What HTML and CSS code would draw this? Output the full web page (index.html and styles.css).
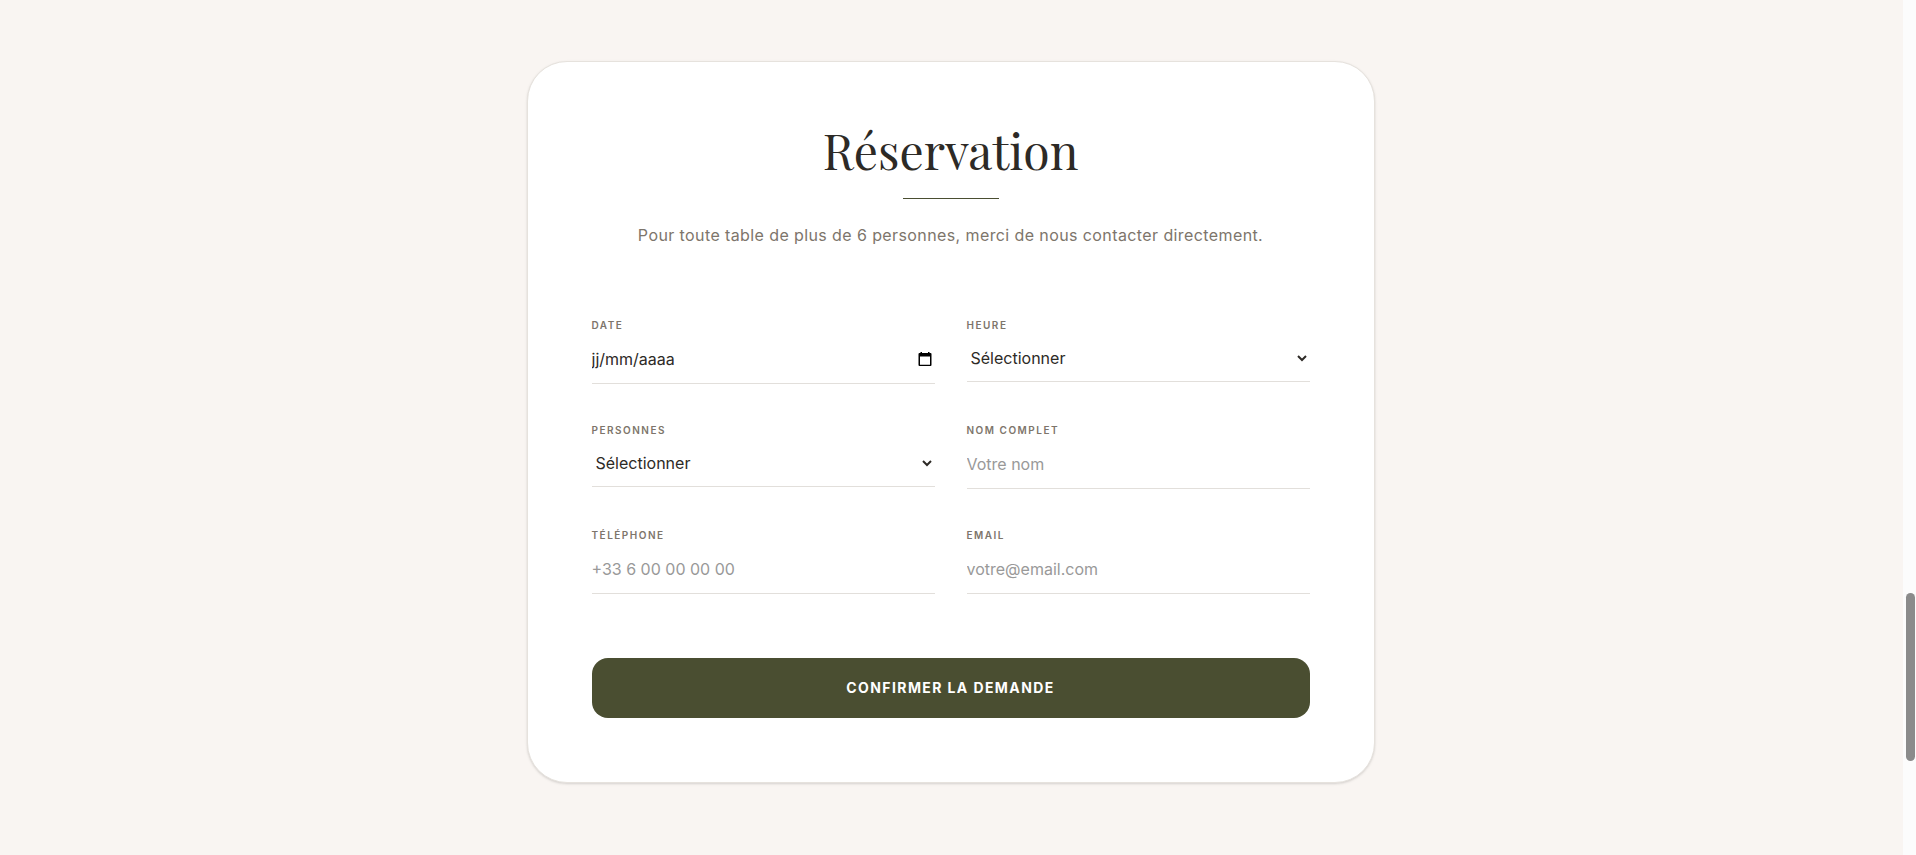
FILE: index.html
```html
<!DOCTYPE html>
<html lang="fr">
<head>
<meta charset="utf-8">
<meta name="viewport" content="width=device-width, initial-scale=1">
<title>Réservation</title>
<link rel="stylesheet" href="styles.css">
</head>
<body class="page">
<main class="section">
  <section class="card">
    <header class="card-header">
      <h2 class="title">Réservation</h2>
      <div class="divider"></div>
      <p class="subtitle">Pour toute table de plus de 6 personnes, merci de nous contacter directement.</p>
    </header>
    <form class="form">
      <div class="fields">
        <div class="field">
          <label class="label" for="date">Date</label>
          <div class="date-box">
            <input class="control date" id="date" type="text" placeholder="jj/mm/aaaa">
            <button class="picker" type="button" aria-label="Ouvrir le calendrier">
              <svg class="picker-icon" viewBox="0 0 14 14" aria-hidden="true"><path fill="#000" fill-rule="evenodd" d="M2.500 0H4V1H10V0H11.500V1H12.500Q13.500 1 13.500 2V13Q13.500 14 12.500 14H1.500Q.5 14 .5 13V2Q.5 1 1.500 1H2.500ZM2 4.500V12.700H12V4.500Z"/></svg>
            </button>
          </div>
        </div>
        <div class="field">
          <label class="label" for="time">Heure</label>
          <select class="control select" id="time"><option>Sélectionner</option></select>
        </div>
        <div class="field">
          <label class="label" for="guests">Personnes</label>
          <select class="control select" id="guests"><option>Sélectionner</option></select>
        </div>
        <div class="field">
          <label class="label" for="name">Nom complet</label>
          <input class="control" id="name" type="text" placeholder="Votre nom">
        </div>
        <div class="field">
          <label class="label" for="phone">Téléphone</label>
          <input class="control" id="phone" type="tel" placeholder="+33 6 00 00 00 00">
        </div>
        <div class="field">
          <label class="label" for="email">Email</label>
          <input class="control" id="email" type="email" placeholder="votre@email.com">
        </div>
      </div>
      <button class="submit" type="submit">Confirmer la demande</button>
    </form>
  </section>
</main>
<div class="scrollbar" aria-hidden="true"><div class="thumb"></div></div>
</body>
</html>
```
FILE: styles.css
```css
* { box-sizing: border-box; }

.page {
  margin: 0;
  min-height: 100vh;
  display: flex;
  background: #f9f5f2;
  color: #2d2a26;
  font-family: Inter, "Liberation Sans", sans-serif;
  font-size: 16px;
  line-height: 24px;
}

.section {
  flex: 1;
  min-width: 0;
  padding: 61px 24px;
}

.card {
  max-width: 848px;
  margin: 0 auto;
  padding: 64px;
  background: #fff;
  border: 1px solid #e6e2dd;
  border-radius: 40px;
  box-shadow: 0 1px 2px rgba(0, 0, 0, 0.05), 0 1px 3px rgba(0, 0, 0, 0.1);
}

.card-header {
  display: flex;
  flex-direction: column;
  align-items: center;
  text-align: center;
  margin-bottom: 70px;
}

.title {
  margin: 0;
  font-family: "Playfair Display", "Liberation Serif", serif;
  font-size: 48px;
  line-height: 48px;
  font-weight: 400;
}

.divider {
  width: 96px;
  height: 1px;
  margin: 24px 0;
  background: #4a4e31;
}

.subtitle {
  margin: 0;
  color: #7d756b;
  letter-spacing: 0.025em;
}

.form {
  display: flex;
  flex-direction: column;
  gap: 64px;
}

.fields {
  display: grid;
  grid-template-columns: 1fr 1fr;
  gap: 38px 32px;
  align-items: start;
}

.field {
  display: flex;
  flex-direction: column;
  gap: 2px;
}

.label {
  font-size: 10px;
  line-height: 16px;
  font-weight: 600;
  letter-spacing: 0.15em;
  text-transform: uppercase;
  color: #7d756b;
}

.control {
  width: 100%;
  height: 49px;
  margin: 0;
  padding: 12px 0;
  border: 0;
  border-bottom: 1px solid #e2dfdb;
  border-radius: 0;
  background: transparent;
  color: #2d2a26;
  font: inherit;
  outline: none;
}

.control::placeholder { color: #999; opacity: 1; }
.date::placeholder { color: #2d2a26; }
.select { height: 47px; }

.date-box { position: relative; }

.picker {
  position: absolute;
  right: 3px;
  top: 17px;
  padding: 0;
  border: 0;
  background: none;
  line-height: 0;
}

.picker-icon { width: 14px; height: 14px; }

.submit {
  width: 100%;
  padding: 18px;
  border: 0;
  border-radius: 16px;
  background: #4a4e31;
  color: #fff;
  font-family: inherit;
  font-size: 14px;
  line-height: 24px;
  font-weight: 700;
  letter-spacing: 0.1em;
  text-transform: uppercase;
}

.scrollbar {
  width: 15px;
  padding: 0 1px 0 3px;
  border-left: 2px solid #f9f5f2;
  background: #fcfcfc;
  display: flex;
  flex-direction: column;
}

.scrollbar::before { content: ""; flex: 593; }
.scrollbar::after { content: ""; flex: 94; }
.thumb { flex: 168; border-radius: 5px; background: #8b8b8b; }

@media (max-width: 640px) {
  .card { padding: 32px; }
  .fields { grid-template-columns: 1fr; }
}
```
